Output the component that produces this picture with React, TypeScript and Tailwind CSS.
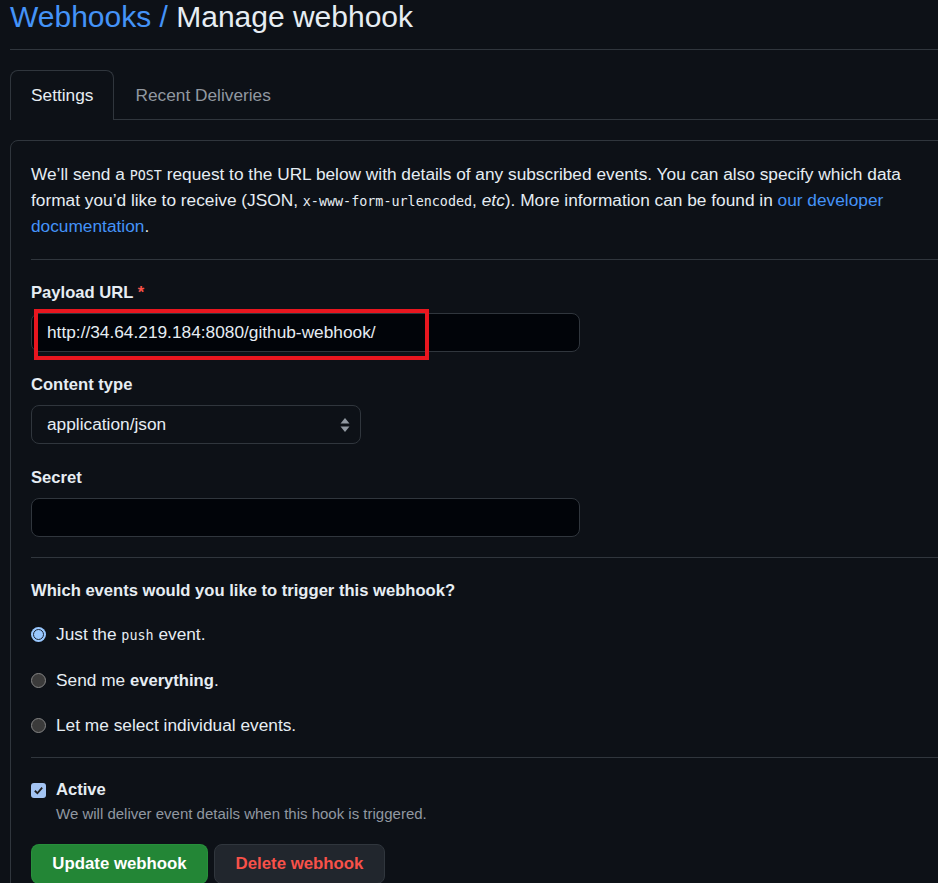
import React from "react";

const MONO = "font-['DejaVu_Sans_Mono','Liberation_Mono',monospace] text-[13.4px] leading-none";

function RadioRow({ checked, children, className }: { checked?: boolean; children: React.ReactNode; className?: string }) {
  return (
    <div className={"flex h-[26px] items-center gap-[10px] leading-[26px] " + (className ?? "")}>
      {checked ? (
        <div className="flex h-[15px] w-[15px] items-center justify-center rounded-full bg-[#99c8ff]">
          <div className="h-[11px] w-[11px] rounded-full border-[1.5px] border-[#1b2433] bg-[#99c8ff]" />
        </div>
      ) : (
        <div className="h-[15px] w-[15px] rounded-full border border-[#858585] bg-[#3b3b3b]" />
      )}
      <span>{children}</span>
    </div>
  );
}

export default function App() {
  return (
    <div className="min-h-[883px] w-full overflow-hidden bg-[#0d1117] pl-[10px] font-['Liberation_Sans',Arial,sans-serif] text-[17.3px] text-[#e6edf3]">
      {/* Header */}
      <div className="h-[50px] border-b border-[#30363d]">
        <h1 className="text-[30px] font-normal leading-[34px]">
          <span className="text-[#4493f8]">Webhooks /</span> Manage webhook
        </h1>
      </div>

      {/* Tabs */}
      <div className="mt-5 flex h-[50px] border-b border-[#30363d]">
        <div className="-mb-px flex h-[50px] items-center rounded-t-lg border border-b-0 border-[#30363d] bg-[#0d1117] px-5">
          Settings
        </div>
        <div className="-mb-px flex h-[50px] items-center border border-b-0 border-transparent px-5 text-[#9198a1]">
          Recent Deliveries
        </div>
      </div>

      {/* Panel */}
      <div className="mt-5 w-[1200px] rounded-lg border border-[#30363d] p-5 pb-10">
        <p className="leading-[26px]">
          <span className="block h-[26px] whitespace-nowrap">
            We’ll send a <code className={MONO}>POST</code> request to the URL below with details of any subscribed
            events. You can also specify which data
          </span>
          <span className="block h-[26px] whitespace-nowrap">
            format you’d like to receive (JSON, <code className={MONO}>x-www-form-urlencoded</code>, <em>etc</em>). More
            information can be found in <a className="text-[#4493f8]">our developer</a>
          </span>
          <span className="block h-[26px] whitespace-nowrap">
            <a className="text-[#4493f8]">documentation</a>.
          </span>
        </p>

        <div className="mt-5 h-px bg-[#30363d]" />

        {/* Payload URL */}
        <div className="mt-5">
          <label className="block text-[16.6px] font-semibold leading-[26px]">
            Payload URL <span className="text-[#f85149]">*</span>
          </label>
          <div className="relative mt-[7px] w-[549px]">
            <div className="flex h-[39px] items-center rounded-lg border border-[#30363d] bg-[#010409] px-[15px]">
              http://34.64.219.184:8080/github-webhook/
            </div>
            <div className="pointer-events-none absolute left-[3px] top-[-4px] h-[51px] w-[395px] border-4 border-[#e8161f]" />
          </div>
        </div>

        {/* Content type */}
        <div className="mt-5">
          <label className="block text-[16.6px] font-semibold leading-[26px]">Content type</label>
          <div className="mt-[7px] flex h-[39px] w-[330px] items-center justify-between rounded-lg border border-[#30363d] bg-[#0d1117] pl-[15px] pr-[10px]">
            <span>application/json</span>
            <svg width="10" height="16" viewBox="0 0 10 16" className="text-[#9198a1]">
              <path d="M5 1 L9.5 6.5 H0.5 Z" fill="currentColor" />
              <path d="M5 15 L9.5 9.5 H0.5 Z" fill="currentColor" />
            </svg>
          </div>
        </div>

        {/* Secret */}
        <div className="mt-[21px]">
          <label className="block text-[16.6px] font-semibold leading-[26px]">Secret</label>
          <div className="mt-[7px] h-[39px] w-[549px] rounded-lg border border-[#30363d] bg-[#010409]" />
        </div>

        <div className="mt-5 h-px bg-[#30363d]" />

        {/* Events */}
        <div className="mt-5">
          <div className="text-[16.6px] font-semibold leading-[26px]">Which events would you like to trigger this webhook?</div>
          <RadioRow checked className="mt-[17px]">
            Just the <code className={MONO}>push</code> event.
          </RadioRow>
          <RadioRow className="mt-[20px]">
            Send me <strong className="text-[16.6px] font-semibold">everything</strong>.
          </RadioRow>
          <RadioRow className="mt-[19px]">Let me select individual events.</RadioRow>
        </div>

        <div className="mt-[19px] h-px bg-[#30363d]" />

        {/* Active */}
        <div className="mt-[19px]">
          <div className="flex h-[26px] items-center gap-[10px] leading-[26px]">
            <div className="flex h-[15px] w-[15px] items-center justify-center rounded-[3px] bg-[#a3c4f3]">
              <svg width="11" height="11" viewBox="0 0 12 12">
                <path d="M2 6.3 L4.8 9 L10 2.8" fill="none" stroke="#1f1f1f" strokeWidth="2" />
              </svg>
            </div>
            <span className="text-[16.6px] font-semibold">Active</span>
          </div>
          <div className="pl-[25px] text-[15px] leading-[22px] text-[#9198a1]">
            We will deliver event details when this hook is triggered.
          </div>
        </div>

        {/* Buttons */}
        <div className="mt-[19px] flex gap-[6px]">
          <button className="flex h-[40px] w-[177px] items-center justify-center rounded-lg border border-[#2ea043]/40 bg-[#238636] text-[16.8px] font-semibold text-white">
            Update webhook
          </button>
          <button className="flex h-[40px] w-[171px] items-center justify-center rounded-lg border border-[#30363d] bg-[#21262d] text-[16.8px] font-semibold text-[#f85149]">
            Delete webhook
          </button>
        </div>
      </div>
    </div>
  );
}
